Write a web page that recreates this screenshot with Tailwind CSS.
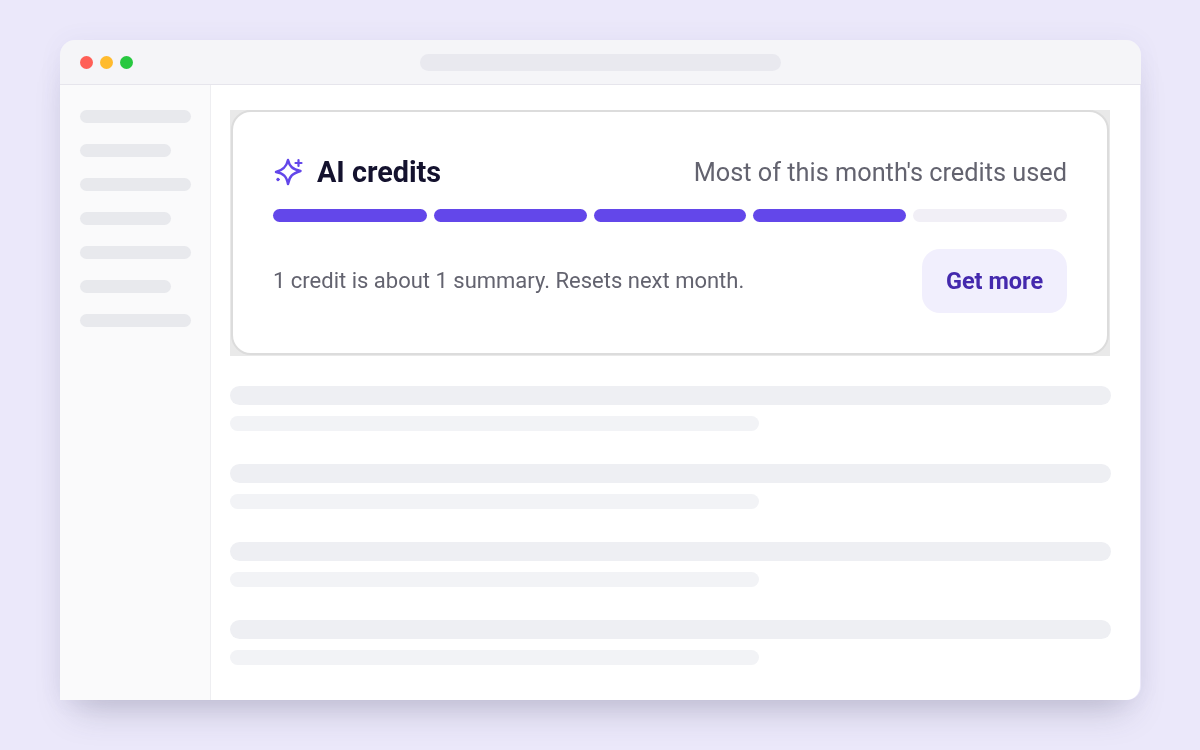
<!DOCTYPE html>
<html lang="en">
  <head>
    <meta charset="UTF-8" />
    <meta name="viewport" content="width=device-width, initial-scale=1.0" />
    <title>AI credits</title>
    <script src="https://cdn.jsdelivr.net/npm/@tailwindcss/browser@4"></script>
  </head>
  <body class="bg-[#ebe8fa] h-[750px] overflow-hidden pt-10 pl-[60px] font-['Roboto',sans-serif]">
    <div class="w-[1081px] h-[660px] flex flex-col rounded-t-[15px] rounded-br-[14px] shadow-[0_0_24px_rgba(90,80,150,0.06),0_22px_36px_-14px_rgba(60,58,90,0.27)]">
      <!-- title bar -->
      <div class="h-[45px] shrink-0 flex items-center bg-[#f5f5f8] border-b border-[#e6e5ec] rounded-t-[15px] pl-5">
        <div class="flex gap-[7px]">
          <span class="w-[13px] h-[13px] rounded-full bg-[#ff5f57]"></span>
          <span class="w-[13px] h-[13px] rounded-full bg-[#ffbb2e]"></span>
          <span class="w-[13px] h-[13px] rounded-full bg-[#28c840]"></span>
        </div>
        <div class="w-[361px] h-[17px] rounded-full bg-[#e9e9ef] ml-[287px]"></div>
      </div>

      <div class="flex flex-1 min-h-0 w-[1080px] bg-white rounded-br-[14px]">
        <!-- sidebar -->
        <div class="w-[151px] shrink-0 bg-[#fafafb] border-r border-[#eeeef1] pt-[25px] pl-5 flex flex-col gap-[21px]">
          <div class="w-[111px] h-[13px] rounded-full bg-[#e8e9ed]"></div>
          <div class="w-[91px] h-[13px] rounded-full bg-[#e8e9ed]"></div>
          <div class="w-[111px] h-[13px] rounded-full bg-[#e8e9ed]"></div>
          <div class="w-[91px] h-[13px] rounded-full bg-[#e8e9ed]"></div>
          <div class="w-[111px] h-[13px] rounded-full bg-[#e8e9ed]"></div>
          <div class="w-[91px] h-[13px] rounded-full bg-[#e8e9ed]"></div>
          <div class="w-[111px] h-[13px] rounded-full bg-[#e8e9ed]"></div>
        </div>

        <!-- main -->
        <div class="flex-1 pt-[25px] pl-[19px]">
          <div class="w-[880px] h-[246px] bg-[#e9e9e9]">
            <div class="w-[878px] h-[245px] ml-[1px] bg-white border-2 border-[#dcdcdc] rounded-[20px] pt-[40px] pl-[40px] pr-[40px] blur-[0.35px]">
              <div class="flex items-center justify-between h-[40px]">
                <div class="flex items-center gap-[14px]">
                  <svg class="w-[30px] h-[30px]" viewBox="0 0 30 30" fill="none" stroke="#6347ea" stroke-width="2.5" stroke-linejoin="round" stroke-linecap="round">
                    <path d="M15 3 C16.5 9.5 19.5 12 27.5 14 C19.5 16.5 16.5 19 15 27 C13.5 19 10.5 16.5 3 15 C10.5 13 13.5 9.5 15 3 Z" />
                    <path d="M25.5 3 V9 M22.5 6 H28.5" stroke-width="2.2" />
                    <circle cx="5" cy="22.5" r="1.3" fill="#6347ea" stroke-width="1" />
                  </svg>
                  <span class="text-[28.8px] leading-none font-bold text-[#14122e]">AI credits</span>
                </div>
                <span class="text-[25.3px] leading-none text-[#63636f] mt-[2px]">Most of this month's credits used</span>
              </div>

              <div class="flex justify-between mt-[17px]">
                <div class="w-[154px] h-[13px] rounded-full bg-[#6347ea]"></div>
                <div class="w-[153px] h-[13px] rounded-full bg-[#6347ea]"></div>
                <div class="w-[152px] h-[13px] rounded-full bg-[#6347ea]"></div>
                <div class="w-[153px] h-[13px] rounded-full bg-[#6347ea]"></div>
                <div class="w-[154px] h-[13px] rounded-full bg-[#f1eff6]"></div>
              </div>

              <div class="flex items-center justify-between mt-[27px]">
                <span class="text-[22px] leading-none text-[#63636f]">1 credit is about 1 summary. Resets next month.</span>
                <button class="w-[145px] h-[64px] pt-[2px] rounded-[18px] bg-[#f1effd] text-[23.5px] font-bold text-[#4429ad]">Get more</button>
              </div>
            </div>
          </div>

          <!-- skeleton rows -->
          <div class="flex flex-col gap-[33px] mt-[30px]">
            <div class="flex flex-col gap-[11px]">
              <div class="w-[881px] h-[19px] rounded-full bg-[#eeeff3]"></div>
              <div class="w-[529px] h-[15px] rounded-full bg-[#f2f3f6]"></div>
            </div>
            <div class="flex flex-col gap-[11px]">
              <div class="w-[881px] h-[19px] rounded-full bg-[#eeeff3]"></div>
              <div class="w-[529px] h-[15px] rounded-full bg-[#f2f3f6]"></div>
            </div>
            <div class="flex flex-col gap-[11px]">
              <div class="w-[881px] h-[19px] rounded-full bg-[#eeeff3]"></div>
              <div class="w-[529px] h-[15px] rounded-full bg-[#f2f3f6]"></div>
            </div>
            <div class="flex flex-col gap-[11px]">
              <div class="w-[881px] h-[19px] rounded-full bg-[#eeeff3]"></div>
              <div class="w-[529px] h-[15px] rounded-full bg-[#f2f3f6]"></div>
            </div>
          </div>
        </div>
      </div>
    </div>
  </body>
</html>
